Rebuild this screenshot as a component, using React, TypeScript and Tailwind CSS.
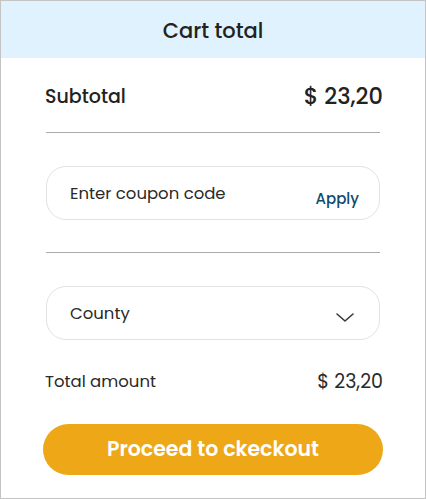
const CartTotal = () => {
  return (
    <div
      className="w-[426px] h-[499px] border border-[#c4c4c4] bg-white flex flex-col text-[#222]"
      style={{ fontFamily: "Poppins, Inter, 'Noto Sans', sans-serif" }}
    >
      <div className="h-[57px] bg-[#dff2fd] flex items-center justify-center pt-[3px]">
        <h2 className="text-[21px] font-medium text-[#222]">Cart total</h2>
      </div>

      <div className="flex flex-col px-[42px] pt-[24px]">
        <div className="flex items-center justify-between h-[30px] px-[2px]">
          <span className="text-[19px] font-medium">Subtotal</span>
          <span className="text-[22.5px] font-medium -mr-[2px]">$ 23,20</span>
        </div>

        <div className="h-px bg-[#aaa] mt-[20px] mx-[3px]" />

        <div className="mt-[33px] mx-[3px] h-[54px] rounded-[20px] border border-[#e2e2e2] flex items-start justify-between pl-[23px] pr-[20px]">
          <span className="text-[16.5px] mt-[15px] text-[#2a2a2a]">Enter coupon code</span>
          <button className="text-[15px] font-medium text-[#134a6b] mt-[21px]">Apply</button>
        </div>

        <div className="h-px bg-[#aaa] mt-[32px] mx-[3px]" />

        <div className="mt-[33px] mx-[3px] h-[54px] rounded-[20px] border border-[#e2e2e2] flex items-start justify-between pl-[23px] pr-[25px]">
          <span className="text-[16.5px] mt-[15px] text-[#2a2a2a]">County</span>
          <svg className="mt-[26px]" width="18" height="9" viewBox="0 0 18 9" fill="none">
            <path d="M1 1l8 7 8-7" stroke="#333" strokeWidth="1.5" strokeLinecap="round" strokeLinejoin="round" />
          </svg>
        </div>

        <div className="flex items-center justify-between mt-[30px] h-[24px] px-[2px]">
          <span className="text-[16.5px] text-[#2a2a2a]">Total amount</span>
          <span className="text-[19px] text-[#2a2a2a] -mr-[2px]">$ 23,20</span>
        </div>

        <button className="mt-[30px] h-[51px] rounded-full bg-[#eda717] text-white text-[20.5px] font-semibold">
          Proceed to ckeckout
        </button>
      </div>
    </div>
  );
};

export default CartTotal;
